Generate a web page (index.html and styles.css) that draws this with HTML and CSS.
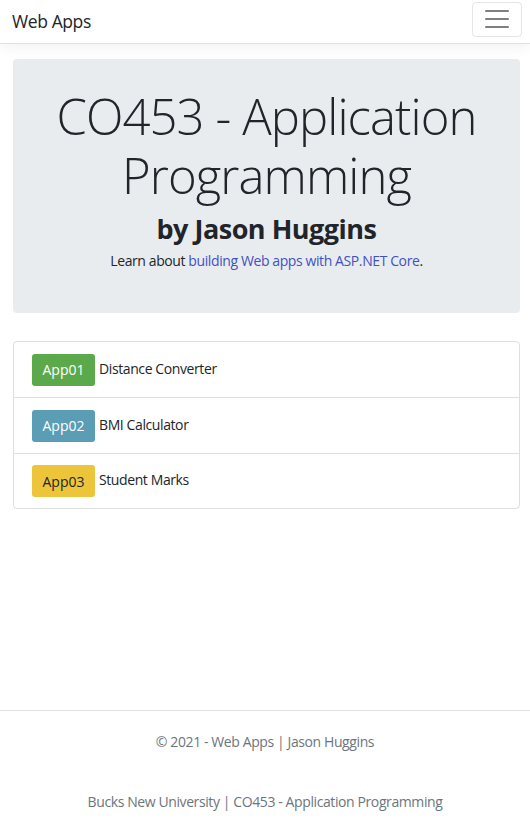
FILE: index.html
```html
<!DOCTYPE html>
<html lang="en">
<head>
<meta charset="utf-8">
<title>Web Apps</title>
<link rel="stylesheet" href="styles.css">
</head>
<body>
<div class="page">
  <header class="navbar">
    <a class="brand" href="#">Web Apps</a>
    <button class="toggler" aria-label="Toggle navigation">
      <svg width="30" height="30" viewBox="0 0 30 30"><path stroke="rgba(0,0,0,0.5)" stroke-width="2" stroke-linecap="round" d="M4 7h22M4 15h22M4 23h22"/></svg>
    </button>
  </header>
  <main class="container">
    <section class="jumbotron">
      <h1 class="display">CO453 - Application Programming</h1>
      <h2 class="author">by Jason Huggins</h2>
      <p class="lead">Learn about <a href="#">building Web apps with ASP.NET Core</a>.</p>
    </section>
    <ul class="list">
      <li class="item"><a class="btn btn-green" href="#">App01</a><span>Distance Converter</span></li>
      <li class="item"><a class="btn btn-blue" href="#">App02</a><span>BMI Calculator</span></li>
      <li class="item"><a class="btn btn-yellow" href="#">App03</a><span>Student Marks</span></li>
    </ul>
  </main>
  <footer class="footer">
    <p>© 2021 - Web Apps | Jason Huggins</p>
    <p>Bucks New University | CO453 - Application Programming</p>
  </footer>
</div>
</body>
</html>
```
FILE: styles.css
```css
* { box-sizing: border-box; }
html, body { margin: 0; padding: 0; }
body {
  font-family: "Open Sans", "Noto Sans", sans-serif;
  font-size: 14px;
  line-height: 1.5;
  color: #212529;
  background: #fff;
  letter-spacing: -0.4px;
}
.page { min-height: 820px; display: flex; flex-direction: column; }
.navbar {
  display: flex;
  justify-content: space-between;
  align-items: center;
  height: 44px;
  padding: 0 8px 0 12px;
  border-bottom: 1px solid #dee2e6;
  box-shadow: 0 .25rem .75rem rgba(0,0,0,.05);
}
.brand { font-size: 17.5px; color: #212529; text-decoration: none; }
.toggler {
  width: 50px; height: 35px;
  background: transparent;
  border: 1px solid rgba(0,0,0,.1);
  border-radius: 4px;
  display: flex; align-items: center; justify-content: center;
  padding: 0;
  margin-top: -5px;
}
.container { padding: 15px 10px 0 13px; flex: 1; }
.jumbotron {
  background: #e9ecef;
  border-radius: 4px;
  padding: 28px 14px 42px;
  text-align: center;
}
.display {
  font-size: 49px;
  font-weight: 300;
  line-height: 1.2;
  margin: 0;
  letter-spacing: -0.9px;
}
.author { font-size: 27px; font-weight: 700; margin: 8px 0 5px; line-height: 1.2; letter-spacing: -0.5px; }
.lead { margin: 0; }
.lead a { color: #3f51c5; text-decoration: none; }
.list {
  list-style: none;
  margin: 28px 0 0;
  padding: 0;
  border: 1px solid rgba(0,0,0,.125);
  border-radius: 4px;
}
.item {
  display: flex;
  align-items: center;
  gap: 4px;
  height: 55.5px;
  padding: 0 18px;
  border-top: 1px solid rgba(0,0,0,.125);
}
.item:first-child { border-top: 0; }
.item span { margin-top: -3px; }
.btn {
  display: inline-block;
  padding: 5.5px 10.5px;
  border-radius: 3px;
  color: #fff;
  text-decoration: none;
  line-height: 1.5;
  letter-spacing: 0;
}
.btn-green { background: #5ca94c; }
.btn-blue { background: #5a9db4; }
.btn-yellow { background: #ecc53a; color: #212529; }
.footer {
  border-top: 1px solid #dee2e6;
  color: #6c757d;
  text-align: center;
  padding: 20px 0 0;
  height: 110px;
}
.footer p { margin: 0 0 39px; }
```
